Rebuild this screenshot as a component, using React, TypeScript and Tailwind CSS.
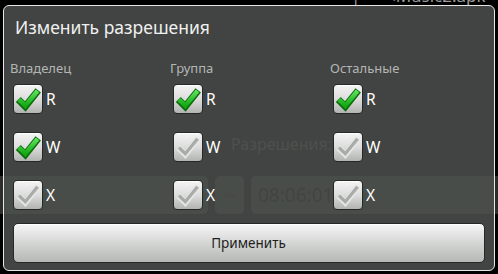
import React from "react";

const Check: React.FC<{ on: boolean }> = ({ on }) => (
  <span className="w-[30px] h-[30px] shrink-0 rounded-[4px] border border-[#262826] bg-linear-to-b from-[#f4f4f4] via-[#dcdddc] to-[#b2b4b2] flex items-center justify-center shadow-[inset_0_1px_0_#ffffff]">
    <svg width="28" height="28" viewBox="0 0 26 26" className="-mt-[1px]">
      {on ? (
        <>
          <defs>
            <linearGradient id="g" x1="0" y1="0" x2="0" y2="1">
              <stop offset="0" stopColor="#5fe05f" />
              <stop offset="1" stopColor="#14a814" />
            </linearGradient>
          </defs>
          <path d="M4 13.5 L10.5 20 L22.5 5" fill="none" stroke="#0b6e0b" strokeWidth="6.5" strokeLinejoin="miter" strokeLinecap="butt" />
          <path d="M4.6 13.5 L10.5 19.2 L21.9 5.4" fill="none" stroke="url(#g)" strokeWidth="4.2" strokeLinejoin="miter" strokeLinecap="butt" />
        </>
      ) : (
        <>
          <path d="M4 13.5 L10.5 20 L22.5 5" fill="none" stroke="#e4e5e4" strokeWidth="5.5" />
          <path d="M4.6 13.5 L10.5 19.2 L21.9 5.4" fill="none" stroke="#a9aba9" strokeWidth="3" />
        </>
      )}
    </svg>
  </span>
);

const columns = [
  { title: "Владелец", r: true, w: true, x: false },
  { title: "Группа", r: true, w: false, x: false },
  { title: "Остальные", r: true, w: false, x: false },
];

const App: React.FC = () => {
  return (
    <div className="relative w-[498px] h-[274px] bg-black overflow-hidden font-['Noto_Sans','DejaVu_Sans',sans-serif]">
      {/* app behind the dialog */}
      <div className="flex flex-col h-full">
        <div className="h-[5px] overflow-hidden flex text-[#9a9a9a] text-[17px] leading-[18px]">
          <span className="-mt-[13px] ml-[351px]">|</span>
          <span className="-mt-[13px] ml-[30px]">‹Music2.apk</span>
        </div>
        <div className="h-[124px]" />
        <div className="h-[30px] flex items-center pl-[231px] text-[16px] text-[#3e3f3e]">
          Разрешения:
        </div>
        <div className="h-[17px]" />
        <div className="h-[38px] flex gap-[7px]">
          <div className="w-[208px] rounded-r-[5px] bg-[#2c2d2c]" />
          <div className="w-[29px] rounded-[5px] bg-[#2c2d2c] flex items-center justify-center text-[11px] text-[#111]">
            &gt;&gt;
          </div>
          <div className="flex-1 rounded-l-[5px] bg-[#2c2d2c] flex items-center pl-[7px] text-[19px] text-black">
            08:06:01
          </div>
        </div>
      </div>

      {/* dialog */}
      <div className="absolute left-[3px] top-[5px] w-[492px] h-[266px] rounded-[6px] border-[1.5px] border-[#e6e6e6] bg-[rgba(81,85,82,0.8)] flex flex-col">
        <div className="pt-[9px] pl-[11px] text-[17.5px] leading-[24px] text-[#f0f0f0]">
          Изменить разрешения
        </div>
        <div className="mt-[21px] ml-[6px] grid grid-cols-[160px_160px_160px]">
          {columns.map((c) => (
            <div key={c.title} className="flex flex-col">
              <div className="text-[13px] leading-[16px] text-[#b4b6b4]">{c.title}</div>
              <div className="mt-[8px] ml-[3px] flex flex-col gap-[18px]">
                {(
                  [
                    ["R", c.r],
                    ["W", c.w],
                    ["X", c.x],
                  ] as [string, boolean][]
                ).map(([l, on]) => (
                  <div key={l} className="flex items-center gap-[3px]">
                    <Check on={on} />
                    <span className="text-[15.5px] leading-[20px] text-white">{l}</span>
                  </div>
                ))}
              </div>
            </div>
          ))}
        </div>
        <button className="mt-[13px] ml-[8.5px] w-[472px] h-[40px] rounded-[5px] border border-[#262826] bg-linear-to-b from-[#f6f6f6] via-[#d4d6d4] to-[#b6b8b6] shadow-[inset_0_1px_0_#ffffff] text-[13.5px] text-[#1e1e1e]">
          Применить
        </button>
      </div>
    </div>
  );
};

export default App;
